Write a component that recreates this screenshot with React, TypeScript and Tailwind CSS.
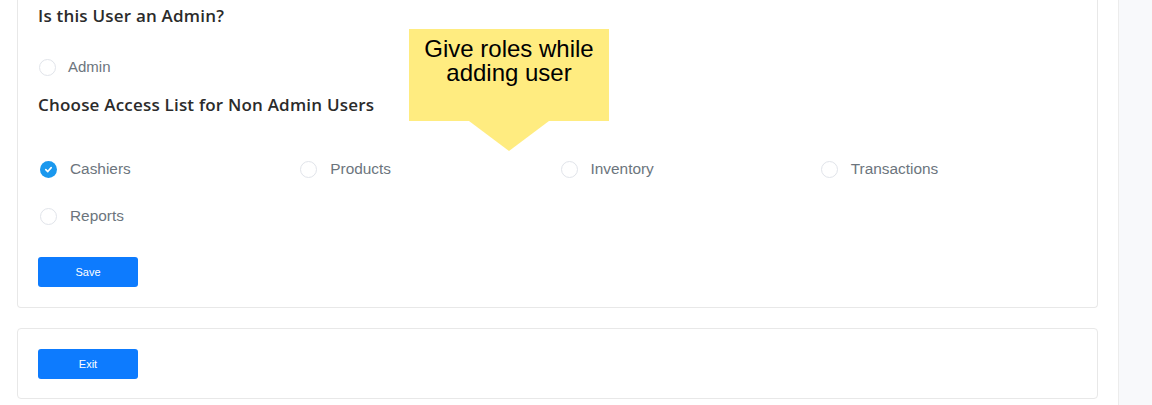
const accessItems = [
  { label: "Cashiers", checked: true },
  { label: "Products", checked: false },
  { label: "Inventory", checked: false },
  { label: "Transactions", checked: false },
  { label: "Reports", checked: false },
];

export default function App() {
  return (
    <div className="relative flex h-[405px] w-[1152px] overflow-hidden bg-white font-['Liberation_Sans',Arial,sans-serif]">
      <main className="flex w-[1118px] flex-col gap-5 pl-[17px] pr-5">
        <section className="rounded-b-sm border-x border-b border-[#e8e8e8] bg-white px-5 pb-5 pt-1">
          <h2 className="font-['Open_Sans',sans-serif] text-[17px] font-semibold leading-6 tracking-[0.2px] text-[#2b2b2b]">
            Is this User an Admin?
          </h2>
          <div className="mt-[30px] flex items-center gap-3 pl-px">
            <Radio checked={false} />
            <span className="text-[15px] leading-[18px] text-[#6c757d]">Admin</span>
          </div>
          <h2 className="mt-[17px] font-['Open_Sans',sans-serif] text-[17px] font-semibold leading-6 tracking-[0.2px] text-[#2b2b2b]">
            Choose Access List for Non Admin Users
          </h2>
          <div className="mt-[43px] grid w-[1043px] grid-cols-4 gap-y-[29px] pl-[2px]">
            {accessItems.map((item) => (
              <label key={item.label} className="flex items-center gap-[13px]">
                <Radio checked={item.checked} />
                <span className="text-[15.4px] leading-[18px] text-[#6c757d]">{item.label}</span>
              </label>
            ))}
          </div>
          <button className="mt-[32px] h-[30px] w-[100px] rounded-[3px] bg-[#0d7bfe] text-[11px] text-white">
            Save
          </button>
        </section>

        <section className="rounded-sm border border-[#e8e8e8] bg-white px-5 pb-[19px] pt-5">
          <button className="h-[30px] w-[100px] rounded-[3px] bg-[#0d7bfe] text-[11px] text-white">
            Exit
          </button>
        </section>
      </main>

      <aside className="flex-1 border-l border-[#ececec] bg-[#f8f9fb]" />

      <div className="absolute left-[409px] top-[29px] flex flex-col items-center">
        <div className="flex h-[92px] w-[200px] flex-col bg-[#ffec80] pt-[8px] text-center text-[24px] leading-6 text-black">
          <span>Give roles while</span>
          <span>adding user</span>
        </div>
        <div className="h-0 w-0 border-x-[40px] border-t-[30px] border-x-transparent border-t-[#ffec80]" />
      </div>
    </div>
  );
}

function Radio({ checked }: { checked: boolean }) {
  if (checked) {
    return (
      <span className="flex size-[17px] items-center justify-center rounded-full bg-[#1a98ee]">
        <svg width="9" height="9" viewBox="0 0 10 10" fill="none">
          <path d="M2 5.2 L4.2 7.3 L8 2.9" stroke="white" strokeWidth="1.8" strokeLinecap="round" strokeLinejoin="round" />
        </svg>
      </span>
    );
  }
  return <span className="size-[17px] rounded-full border border-[#e1e4ea] bg-white" />;
}
